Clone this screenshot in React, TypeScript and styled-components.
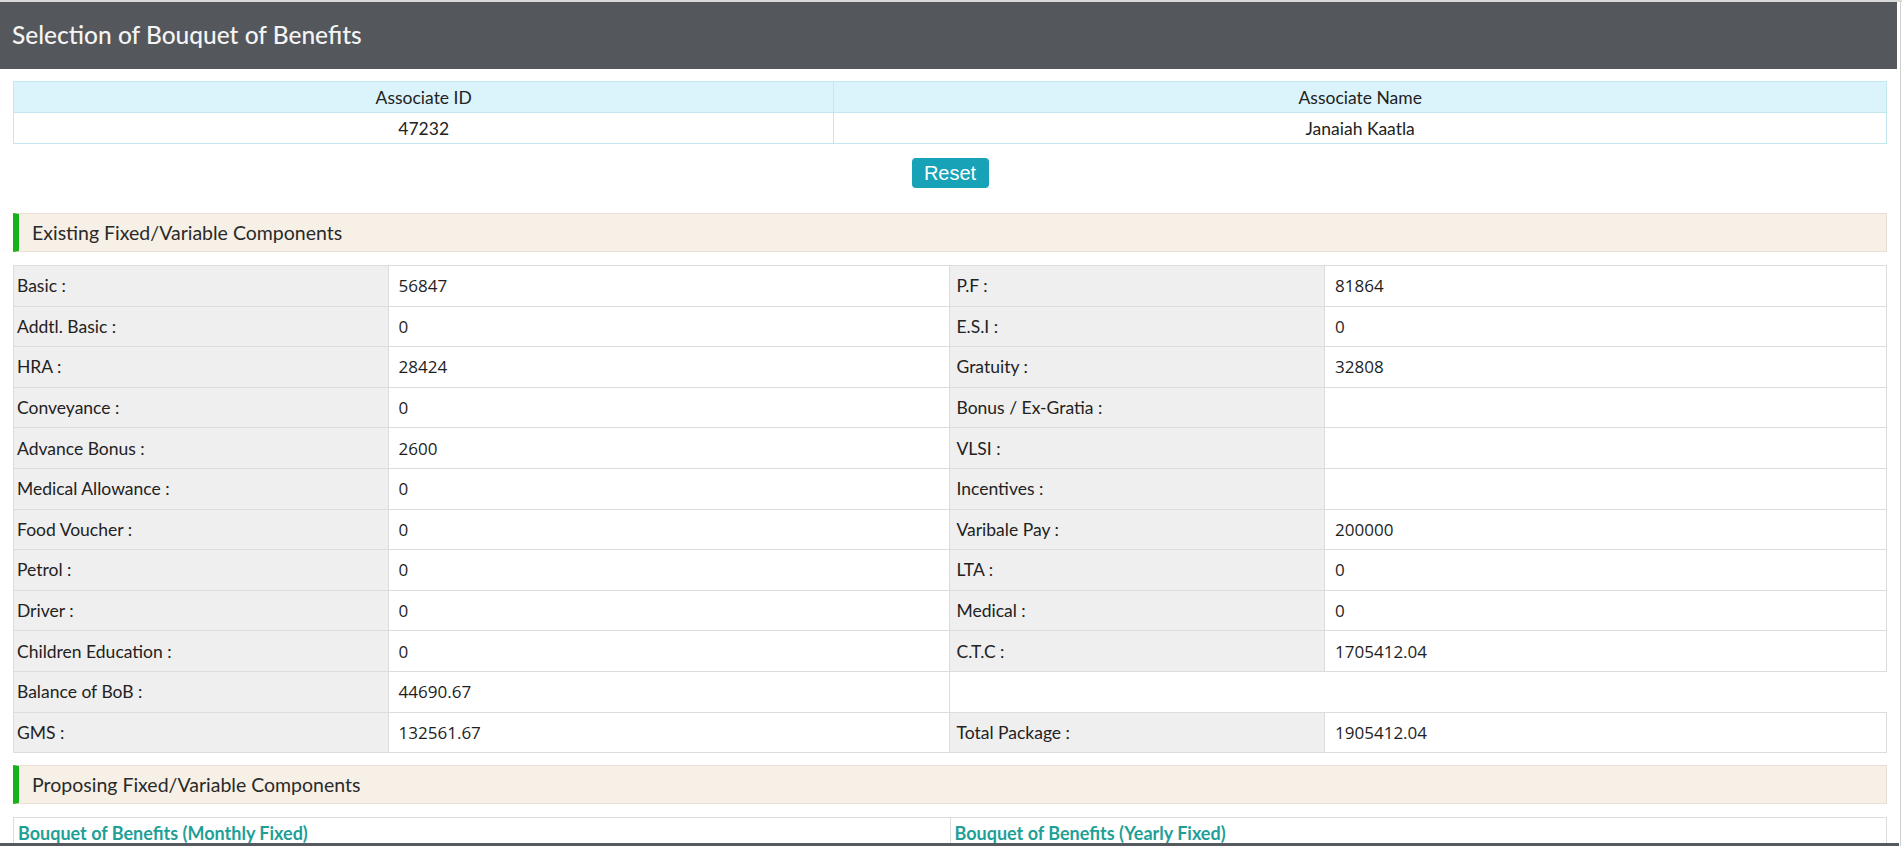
import React from "react";
import styled, { createGlobalStyle } from "styled-components";

const GlobalStyle = createGlobalStyle`
  html, body {
    margin: 0;
    padding: 0;
    background: #ffffff;
    overflow: hidden;
  }
  * {
    box-sizing: border-box;
  }
`;

const Page = styled.div`
  display: flex;
  width: 1902px;
  border-top: 2px solid #d9d9d9;
  font-family: Lato, "Open Sans", sans-serif;
  color: #222;
`;

const Main = styled.div`
  width: 1897px;
`;

const Rail = styled.div`
  width: 5px;
  background: linear-gradient(to right, #fff 3px, #cfcfcf 3px, #cfcfcf 4px, #fff 4px);
`;

const Header = styled.header`
  height: 67px;
  background: #54575b;
  display: flex;
  align-items: center;
  padding: 0 0 2px 12px;
`;

const Title = styled.h1`
  margin: 0;
  font-family: Lato, sans-serif;
  font-size: 24.5px;
  font-weight: 500;
  color: #f4f4f4;
`;

const Content = styled.div`
  padding: 12px 10px 0 13px;
  display: flex;
  flex-direction: column;
`;

const InfoTable = styled.table`
  width: 100%;
  border-collapse: collapse;
  table-layout: fixed;
`;

const InfoHead = styled.th`
  height: 31px;
  background: #dbf4fc;
  border: 1px solid #c2e7f1;
  font-weight: 400;
  font-size: 17.5px;
  text-align: center;
  padding: 0;
`;

const InfoCell = styled.td`
  height: 31px;
  border: 1px solid #c2e7f1;
  font-size: 17.5px;
  text-align: center;
  padding: 0;
`;

const ButtonRow = styled.div`
  display: flex;
  justify-content: center;
  margin: 14px 0 25px;
`;

const ResetButton = styled.button`
  width: 77px;
  height: 30px;
  border: none;
  border-radius: 4px;
  background: #17a2b8;
  color: #fff;
  font-family: "Liberation Sans", Arial, sans-serif;
  font-size: 20px;
  padding: 0;
`;

const SectionBar = styled.div<{ $gap?: number }>`
  height: 39px;
  display: flex;
  align-items: center;
  background: #f7f0e6;
  border: 1px solid #e8ded3;
  border-left: 6px solid #17b21b;
  padding-left: 13px;
  font-size: 19.5px;
  color: #2a2a2a;
  margin-top: ${(p) => p.$gap ?? 0}px;
`;

const DataTable = styled.table`
  width: 100%;
  border-collapse: collapse;
  table-layout: fixed;
  margin-top: 13px;
`;

const Row = styled.tr`
  height: 40.6px;
`;

const Label = styled.td<{ $pad?: number }>`
  background: #efefef;
  border: 1px solid #dcdcdc;
  font-size: 17.5px;
  padding: 0 0 0 ${(p) => p.$pad ?? 3}px;
  color: #222;
`;

const Value = styled.td`
  background: #fff;
  border: 1px solid #dcdcdc;
  font-family: "Open Sans", sans-serif;
  font-size: 17px;
  padding: 0 0 0 10px;
  color: #1e1e1e;
`;

const Blank = styled.td`
  border: none;
  border-top: 1px solid #dcdcdc;
  border-bottom: 1px solid #dcdcdc;
`;

const GroupHead = styled.td`
  height: 40px;
  border: 1px solid #dcdcdc;
  border-bottom: none;
  padding: 4px 0 0 4px;
  vertical-align: top;
  font-size: 18px;
  font-weight: 700;
  color: #1f9f97;
`;

const BottomEdge = styled.div`
  position: fixed;
  left: 0;
  bottom: 0;
  width: 1899px;
  height: 3px;
  background: #555a5e;
`;

type Pair = { label: string; value: string };

const rows: [Pair, Pair | null][] = [
  [{ label: "Basic :", value: "56847" }, { label: "P.F :", value: "81864" }],
  [{ label: "Addtl. Basic :", value: "0" }, { label: "E.S.I :", value: "0" }],
  [{ label: "HRA :", value: "28424" }, { label: "Gratuity :", value: "32808" }],
  [{ label: "Conveyance :", value: "0" }, { label: "Bonus / Ex-Gratia :", value: "" }],
  [{ label: "Advance Bonus :", value: "2600" }, { label: "VLSI :", value: "" }],
  [{ label: "Medical Allowance :", value: "0" }, { label: "Incentives :", value: "" }],
  [{ label: "Food Voucher :", value: "0" }, { label: "Varibale Pay :", value: "200000" }],
  [{ label: "Petrol :", value: "0" }, { label: "LTA :", value: "0" }],
  [{ label: "Driver :", value: "0" }, { label: "Medical :", value: "0" }],
  [{ label: "Children Education :", value: "0" }, { label: "C.T.C :", value: "1705412.04" }],
  [{ label: "Balance of BoB :", value: "44690.67" }, null],
  [{ label: "GMS :", value: "132561.67" }, { label: "Total Package :", value: "1905412.04" }],
];

export default function App() {
  return (
    <>
      <GlobalStyle />
      <Page>
        <Main>
          <Header>
            <Title>Selection of Bouquet of Benefits</Title>
          </Header>
          <Content>
            <InfoTable>
              <colgroup>
                <col style={{ width: "43.8%" }} />
                <col />
              </colgroup>
              <thead>
                <tr>
                  <InfoHead>Associate ID</InfoHead>
                  <InfoHead>Associate Name</InfoHead>
                </tr>
              </thead>
              <tbody>
                <tr>
                  <InfoCell>47232</InfoCell>
                  <InfoCell>Janaiah Kaatla</InfoCell>
                </tr>
              </tbody>
            </InfoTable>

            <ButtonRow>
              <ResetButton>Reset</ResetButton>
            </ButtonRow>

            <SectionBar>Existing Fixed/Variable Components</SectionBar>

            <DataTable>
              <colgroup>
                <col style={{ width: "20%" }} />
                <col style={{ width: "30%" }} />
                <col style={{ width: "20%" }} />
                <col style={{ width: "30%" }} />
              </colgroup>
              <tbody>
                {rows.map(([left, right]) => (
                  <Row key={left.label}>
                    <Label>{left.label}</Label>
                    <Value>{left.value}</Value>
                    {right ? (
                      <>
                        <Label $pad={6}>{right.label}</Label>
                        <Value>{right.value}</Value>
                      </>
                    ) : (
                      <>
                        <Blank />
                        <Blank />
                      </>
                    )}
                  </Row>
                ))}
              </tbody>
            </DataTable>

            <SectionBar $gap={12}>Proposing Fixed/Variable Components</SectionBar>

            <DataTable>
              <tbody>
                <tr>
                  <GroupHead>Bouquet of Benefits (Monthly Fixed)</GroupHead>
                  <GroupHead>Bouquet of Benefits (Yearly Fixed)</GroupHead>
                </tr>
              </tbody>
            </DataTable>
          </Content>
        </Main>
        <Rail />
      </Page>
      <BottomEdge />
    </>
  );
}
